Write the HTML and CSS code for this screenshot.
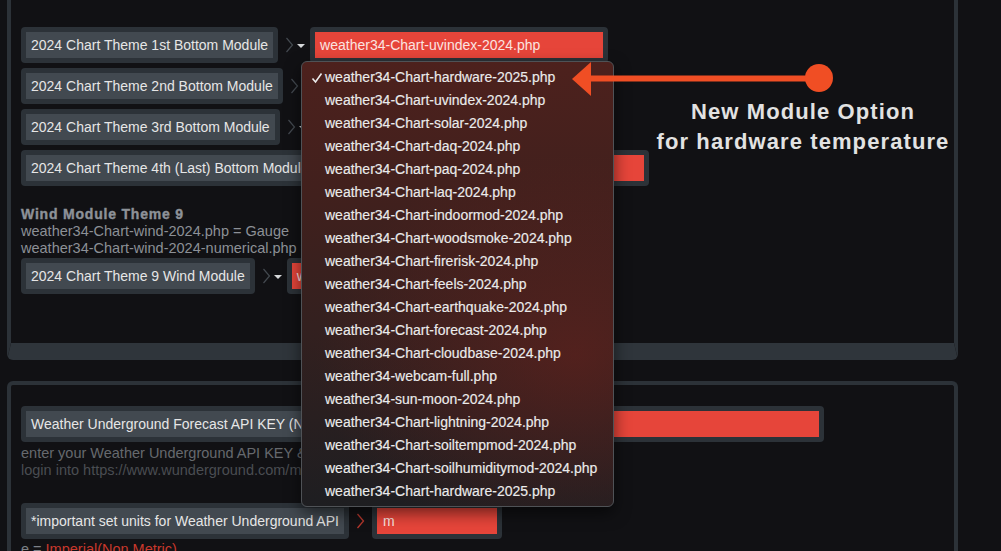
FILE: index.html
```html
<!DOCTYPE html>
<html>
<head>
<meta charset="utf-8">
<link rel="stylesheet" href="styles.css">
</head>
<body>
<div class="page">
  <section class="panel panel-top">
    <div class="rows">
      <div class="row">
        <span class="field"><span class="label">2024 Chart Theme 1st Bottom Module</span></span>
        <span class="sep"><svg width="32" height="36" viewBox="0 0 32 36"><path d="M8.5 11 L14.5 18 L8.5 25" class="chev"/><path d="M19 17 H27 L23 21 Z" class="caret"/></svg></span>
        <span class="field"><span class="select">weather34-Chart-uvindex-2024.php</span></span>
      </div>
      <div class="row">
        <span class="field"><span class="label">2024 Chart Theme 2nd Bottom Module</span></span>
        <span class="sep"><svg width="32" height="36" viewBox="0 0 32 36"><path d="M8.5 11 L14.5 18 L8.5 25" class="chev"/><path d="M19 17 H27 L23 21 Z" class="caret"/></svg></span>
        <span class="field"><span class="select">weather34-Chart-solar-2024.php</span></span>
      </div>
      <div class="row">
        <span class="field"><span class="label">2024 Chart Theme 3rd Bottom Module</span></span>
        <span class="sep"><svg width="32" height="36" viewBox="0 0 32 36"><path d="M8.5 11 L14.5 18 L8.5 25" class="chev"/><path d="M19 17 H27 L23 21 Z" class="caret"/></svg></span>
        <span class="field"><span class="select">weather34-Chart-daq-2024.php</span></span>
      </div>
      <div class="row">
        <span class="field"><span class="label">2024 Chart Theme 4th (Last) Bottom Module</span></span>
        <span class="sep"><svg width="32" height="36" viewBox="0 0 32 36"><path d="M8.5 11 L14.5 18 L8.5 25" class="chev"/><path d="M19 17 H27 L23 21 Z" class="caret"/></svg></span>
        <span class="field"><span class="select">weather34-Chart-paq-2024.php</span></span>
      </div>
    </div>
    <div class="note">
      <h4 class="note-title">Wind Module Theme 9</h4>
      <p class="note-line">weather34-Chart-wind-2024.php = Gauge</p>
      <p class="note-line">weather34-Chart-wind-2024-numerical.php = Numerical</p>
    </div>
    <div class="row row-wind">
      <span class="field"><span class="label">2024 Chart Theme 9 Wind Module</span></span>
      <span class="sep"><svg width="32" height="36" viewBox="0 0 32 36"><path d="M8.5 11 L14.5 18 L8.5 25" class="chev"/><path d="M19 17 H27 L23 21 Z" class="caret"/></svg></span>
      <span class="field"><span class="select">weather34-Chart-wind-2024.php</span></span>
    </div>
  </section>

  <section class="panel panel-bottom">
    <div class="row row-api">
      <span class="field"><span class="label">Weather Underground Forecast API KEY (No Spaces)</span></span>
      <span class="sep sep-red"><svg width="32" height="36" viewBox="0 0 32 36"><path d="M8.5 11 L14.5 18 L8.5 25" class="chev-red"/></svg></span>
      <span class="field field-grow"><span class="select select-grow">&nbsp;</span></span>
    </div>
    <div class="help">
      <p class="help-main">enter your Weather Underground API KEY &amp; units below</p>
      <p class="help-sub">login into https://www.wunderground.com/member/api-keys to get your API key ...</p>
    </div>
    <div class="row row-units">
      <span class="field"><span class="label">*important set units for Weather Underground API</span></span>
      <span class="sep sep-short"><svg width="23" height="36" viewBox="0 0 23 36"><path d="M8.5 11 L14.5 18 L8.5 25" class="chev-red"/></svg></span>
      <span class="field"><span class="select select-small">m</span></span>
    </div>
    <p class="units-line">e = <span class="red-text">Imperial(Non Metric)</span></p>
  </section>

  <div class="menu">
    <div class="menu-item checked"><svg class="check" width="12" height="12" viewBox="0 0 12 12"><path d="M1.5 6.5 L4.5 10 L10.5 1.5"/></svg>weather34-Chart-hardware-2025.php</div>
    <div class="menu-item">weather34-Chart-uvindex-2024.php</div>
    <div class="menu-item">weather34-Chart-solar-2024.php</div>
    <div class="menu-item">weather34-Chart-daq-2024.php</div>
    <div class="menu-item">weather34-Chart-paq-2024.php</div>
    <div class="menu-item">weather34-Chart-laq-2024.php</div>
    <div class="menu-item">weather34-Chart-indoormod-2024.php</div>
    <div class="menu-item">weather34-Chart-woodsmoke-2024.php</div>
    <div class="menu-item">weather34-Chart-firerisk-2024.php</div>
    <div class="menu-item">weather34-Chart-feels-2024.php</div>
    <div class="menu-item">weather34-Chart-earthquake-2024.php</div>
    <div class="menu-item">weather34-Chart-forecast-2024.php</div>
    <div class="menu-item">weather34-Chart-cloudbase-2024.php</div>
    <div class="menu-item">weather34-webcam-full.php</div>
    <div class="menu-item">weather34-sun-moon-2024.php</div>
    <div class="menu-item">weather34-Chart-lightning-2024.php</div>
    <div class="menu-item">weather34-Chart-soiltempmod-2024.php</div>
    <div class="menu-item">weather34-Chart-soilhumiditymod-2024.php</div>
    <div class="menu-item">weather34-Chart-hardware-2025.php</div>
  </div>

  <svg class="callout-arrow" width="280" height="50" viewBox="560 55 280 50">
    <line x1="588" y1="78.5" x2="818" y2="78.5" stroke="#f04e24" stroke-width="6"/>
    <polygon points="572,79 591,62 591,96" fill="#f04e24"/>
    <circle cx="819" cy="78" r="14" fill="#f04e24"/>
  </svg>
  <div class="callout-text">New Module Option<br>for hardware temperature</div>
</div>
</body>
</html>
```
FILE: styles.css
```css
html, body {
  margin: 0;
  padding: 0;
}
body {
  background: #111114;
  width: 1001px;
  height: 551px;
  overflow: hidden;
  font-family: "Liberation Sans", Arial, sans-serif;
  font-size: 14px;
  color: #e4e4e4;
}
.page {
  position: relative;
  width: 1001px;
  height: 551px;
}
.panel {
  box-sizing: border-box;
  margin-left: 7px;
  width: 951px;
  border-color: #2c3238;
  border-style: solid;
  background: #111114;
}
.panel-top {
  border-width: 0 4px 17px 4px;
  border-bottom-color: #2f353b;
  border-radius: 0 0 6px 6px;
  padding: 27px 10px 49px 10px;
}
.panel-bottom {
  margin-top: 21px;
  border-width: 4px 4px 0 4px;
  border-radius: 6px 6px 0 0;
  padding: 21px 10px 0 10px;
  height: 200px;
}
.rows {
  display: flex;
  flex-direction: column;
  gap: 5px;
}
.row {
  display: flex;
  align-items: center;
  height: 36px;
}
.field {
  display: flex;
  background: #2c3238;
  padding: 5px;
  border-radius: 4px;
}
.label {
  display: block;
  background: #424950;
  height: 26px;
  line-height: 26px;
  padding: 0 5px 0 5px;
  white-space: nowrap;
  color: #e6e6e6;
}
.select {
  display: block;
  background: #e6453a;
  width: 283px;
  height: 26px;
  line-height: 26px;
  padding-left: 5px;
  white-space: nowrap;
  color: #fbe4e1;
}
.select-small {
  width: 114px;
  padding-left: 6px;
}
.field-grow {
  flex: 1;
}
.select-grow {
  width: auto;
  flex: 1;
}
.row-api {
  width: 803px;
}
.sep {
  display: flex;
  width: 32px;
  height: 36px;
}
.sep-short {
  width: 23px;
}
.chev {
  fill: none;
  stroke: #444a50;
  stroke-width: 1.2;
}
.chev-red {
  fill: none;
  stroke: #b7382d;
  stroke-width: 1.3;
}
.caret {
  fill: #d6d8da;
}
.note {
  margin-top: 20px;
}
.note-title {
  margin: 0;
  font-size: 14px;
  line-height: 17px;
  font-weight: bold;
  letter-spacing: 0.8px;
  color: #8d9298;
  -webkit-text-stroke: 0.4px #8d9298;
}
.note-line {
  margin: 0;
  font-size: 14.5px;
  line-height: 17px;
  color: #8c9096;
  white-space: nowrap;
}
.row-wind {
  margin-top: 1px;
}
.help {
  margin-top: 3px;
}
.help-main {
  margin: 0;
  font-size: 14.5px;
  line-height: 17px;
  color: #66696e;
  white-space: nowrap;
}
.help-sub {
  margin: 0;
  font-size: 14.5px;
  line-height: 17px;
  color: #4a4d52;
  white-space: nowrap;
}
.row-units {
  margin-top: 24px;
}
.units-line {
  margin: 2px 0 0 0;
  font-size: 14.5px;
  line-height: 17px;
  color: #7d8187;
}
.red-text {
  color: #c9382c;
}
.menu {
  position: absolute;
  left: 301px;
  top: 61px;
  width: 313px;
  height: 446px;
  box-sizing: border-box;
  padding: 4px 0;
  border: 1px solid #4f5256;
  border-radius: 6px;
  background:
    radial-gradient(ellipse 260px 200px at 88% 66%, rgba(110, 34, 28, 0.55), rgba(110, 34, 28, 0) 100%),
    linear-gradient(to bottom, #4d211d 0%, #41201d 30%, #33201f 60%, #1e1e21 100%);
  box-shadow: 0 6px 16px rgba(0, 0, 0, 0.55);
}
.menu-item {
  position: relative;
  height: 23px;
  line-height: 23px;
  padding-left: 23px;
  font-size: 14px;
  color: #ebebeb;
  white-space: nowrap;
  -webkit-text-stroke: 0.15px #ebebeb;
}
.check {
  position: absolute;
  left: 9px;
  top: 6px;
  fill: none;
  stroke: #ebebeb;
  stroke-width: 1.6;
}
.callout-arrow {
  position: absolute;
  left: 560px;
  top: 55px;
}
.callout-text {
  position: absolute;
  left: 640px;
  top: 97px;
  width: 326px;
  text-align: center;
  font-size: 22px;
  line-height: 30px;
  font-weight: bold;
  letter-spacing: 1.1px;
  color: #e2e2e2;
}
```
